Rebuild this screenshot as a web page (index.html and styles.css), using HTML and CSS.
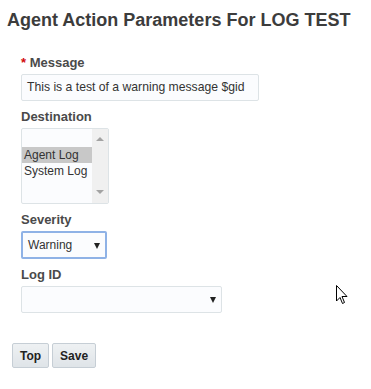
FILE: index.html
```html
<!DOCTYPE html>
<html lang="en">
<head>
    <meta charset="UTF-8">
    <title>Agent Action Parameters</title>
    <link rel="stylesheet" href="styles.css">
</head>
<body>
    <h1 class="title">Agent Action Parameters For LOG TEST</h1>
    <form class="params">
        <div class="field">
            <label class="label"><span class="req">*</span> Message</label>
            <div class="text-input">This is a test of a warning message $gid</div>
        </div>
        <div class="field">
            <label class="label">Destination</label>
            <div class="listbox">
                <div class="options">
                    <div class="option"></div>
                    <div class="option selected">Agent Log</div>
                    <div class="option">System Log</div>
                </div>
                <div class="scrollbar">
                    <span class="arrow up"></span>
                    <span class="arrow down"></span>
                </div>
            </div>
        </div>
        <div class="field">
            <label class="label">Severity</label>
            <div class="select severity focused">Warning<span class="caret"></span></div>
        </div>
        <div class="field">
            <label class="label">Log ID</label>
            <div class="select logid"><span class="caret"></span></div>
        </div>
    </form>
    <div class="actions">
        <button type="button" class="btn">Top</button>
        <button type="button" class="btn">Save</button>
    </div>

    <svg class="cursor" width="12" height="20" viewBox="0 0 12 20">
        <path d="M0.5 0.5 L0.5 16 L4 12.5 L6.5 18.5 L8.5 17.5 L6 11.5 L11 11.5 Z" fill="#fff" stroke="#000" stroke-width="1"/>
    </svg>
</body>
</html>
```

FILE: styles.css
```css
* {
    margin: 0;
    padding: 0;
    box-sizing: border-box;
}

body {
    font-family: Arial, "Liberation Sans", sans-serif;
    background: #fff;
    color: #333;
    position: relative;
    height: 389px;
}

.title {
    font-size: 18px;
    font-weight: bold;
    color: #3c3c3c;
    padding: 10px 0 0 7px;
    line-height: 21px;
    white-space: nowrap;
}

.params {
    padding: 24px 0 0 21px;
}

.field {
    margin-bottom: 8px;
}

.label {
    display: block;
    font-size: 13px;
    font-weight: bold;
    color: #4a4a4a;
    line-height: 15px;
    margin-bottom: 4px;
    white-space: nowrap;
}

.req {
    color: #d20a0a;
}

.text-input {
    width: 238px;
    height: 27px;
    border: 1px solid #dde3e6;
    border-radius: 2px;
    background: #fbfcfe;
    font-size: 12.2px;
    line-height: 25px;
    padding-left: 5px;
    color: #333;
    white-space: nowrap;
    overflow: hidden;
}

.listbox {
    display: flex;
    width: 88px;
    height: 76px;
    border: 1px solid #dde3e6;
    border-radius: 2px;
    background: #fbfcfe;
}

.options {
    flex: 1;
    padding-top: 1px;
    overflow: hidden;
}

.option {
    height: 16px;
    font-size: 12px;
    line-height: 16px;
    padding-left: 2px;
    color: #333;
    white-space: nowrap;
}

.option:first-child {
    height: 17px;
}

.option.selected {
    background: #c8c8c8;
}

.scrollbar {
    width: 16px;
    background: #f0f0f0;
    display: flex;
    flex-direction: column;
    justify-content: space-between;
    align-items: center;
    padding: 8px 0 9px;
}

.arrow {
    width: 0;
    height: 0;
    border-left: 4px solid transparent;
    border-right: 4px solid transparent;
}

.arrow.up {
    border-bottom: 4px solid #a3a3a3;
}

.arrow.down {
    border-top: 4px solid #a3a3a3;
}

.select {
    display: flex;
    align-items: center;
    justify-content: space-between;
    height: 28px;
    border: 1px solid #dde3e6;
    border-radius: 2px;
    background: #fbfcfe;
    font-size: 12px;
    padding: 0 5px 0 6px;
    color: #333;
}

.select.severity {
    width: 86px;
}

.select.focused {
    border: 2px solid #8fb2e6;
    padding-left: 5px;
}

.select.logid {
    width: 201px;
    height: 27px;
    justify-content: flex-end;
}

.caret {
    width: 0;
    height: 0;
    border-left: 3.5px solid transparent;
    border-right: 3.5px solid transparent;
    border-top: 6px solid #222;
    margin-top: 1px;
}

.actions {
    display: flex;
    gap: 3px;
    padding: 22px 0 0 12px;
}

.btn {
    font-family: Arial, "Liberation Sans", sans-serif;
    font-size: 12px;
    font-weight: bold;
    color: #222;
    height: 25px;
    padding: 0 7px;
    border: 1px solid #c6ced5;
    border-radius: 2px;
    background: linear-gradient(#eef1f3, #dfe4e8);
}

.cursor {
    position: absolute;
    left: 336px;
    top: 285px;
}
```
